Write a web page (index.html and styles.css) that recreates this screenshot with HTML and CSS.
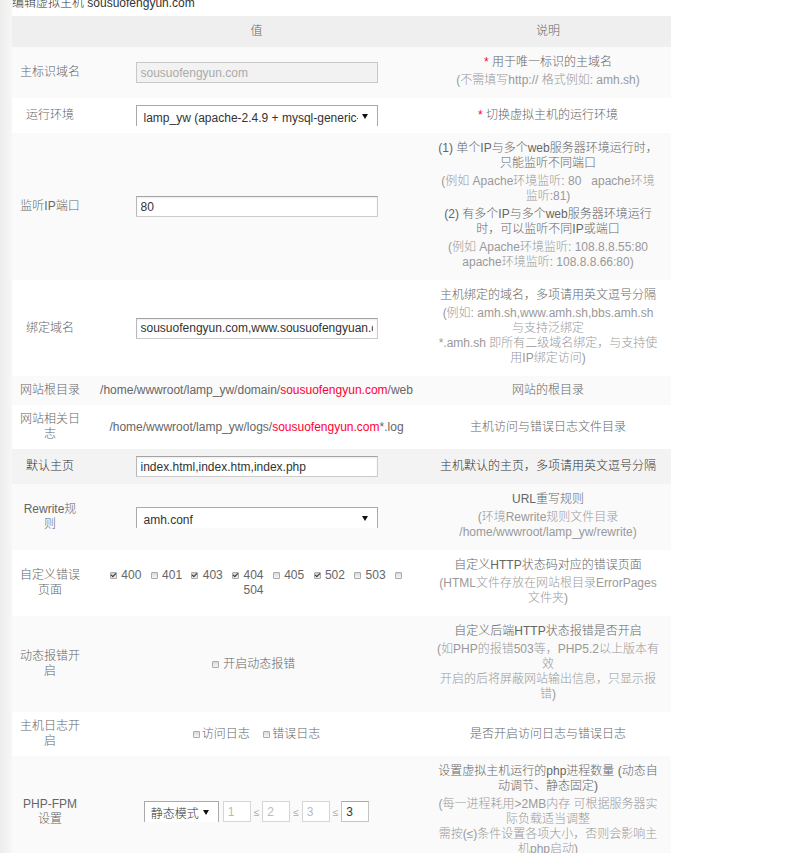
FILE: index.html
```html
<!DOCTYPE html>
<html lang="zh-CN">
<head>
  <meta charset="UTF-8" />
  <title>编辑虚拟主机</title>
  <link rel="stylesheet" href="styles.css">
</head>
<body>
  <div class="page">
    <h3 class="title">编辑虚拟主机 sousuofengyun.com</h3>

    <table class="host-form">
      <colgroup>
        <col class="col-label">
        <col class="col-value">
        <col class="col-note">
      </colgroup>
      <thead>
        <tr><th></th><th>值</th><th>说明</th></tr>
      </thead>
      <tbody>
        <tr class="alt">
          <td class="label">主标识域名</td>
          <td class="value"><input class="txt" type="text" value="sousuofengyun.com" disabled></td>
          <td class="note">
            <p><span class="req">*</span> 用于唯一标识的主域名</p>
            <p class="tip">(不需填写http:// 格式例如: amh.sh)</p>
          </td>
        </tr>
        <tr>
          <td class="label">运行环境</td>
          <td class="value">
            <div class="select">
              <span class="select-text">lamp_yw (apache-2.4.9 + mysql-generic-5.5.37 + php-5.4.29)</span>
              <i class="caret"></i>
            </div>
          </td>
          <td class="note"><span class="req">*</span> 切换虚拟主机的运行环境</td>
        </tr>
        <tr class="alt">
          <td class="label">监听IP端口</td>
          <td class="value"><input class="txt" type="text" value="80"></td>
          <td class="note">
            <p>(1) 单个IP与多个web服务器环境运行时，只能监听不同端口</p>
            <p class="tip">(例如 Apache环境监听: 80&nbsp;&nbsp; apache环境监听:81)</p>
            <p>(2) 有多个IP与多个web服务器环境运行时，可以监听不同IP或端口</p>
            <p class="tip">(例如 Apache环境监听: 108.8.8.55:80 apache环境监听: 108.8.8.66:80)</p>
          </td>
        </tr>
        <tr>
          <td class="label">绑定域名</td>
          <td class="value"><input class="txt" type="text" value="sousuofengyun.com,www.sousuofengyuan.com"></td>
          <td class="note">
            <p>主机绑定的域名，多项请用英文逗号分隔</p>
            <p class="tip">(例如: amh.sh,www.amh.sh,bbs.amh.sh 与支持泛绑定<br>*.amh.sh 即所有二级域名绑定，与支持使用IP绑定访问)</p>
          </td>
        </tr>
        <tr class="alt">
          <td class="label">网站根目录</td>
          <td class="value">/home/wwwroot/lamp_yw/domain/<span class="hl">sousuofengyun.com</span>/web</td>
          <td class="note">网站的根目录</td>
        </tr>
        <tr>
          <td class="label">网站相关日志</td>
          <td class="value">/home/wwwroot/lamp_yw/logs/<span class="hl">sousuofengyun.com</span>*.log</td>
          <td class="note">主机访问与错误日志文件目录</td>
        </tr>
        <tr class="hover">
          <td class="label">默认主页</td>
          <td class="value"><input class="txt" type="text" value="index.html,index.htm,index.php"></td>
          <td class="note">主机默认的主页，多项请用英文逗号分隔</td>
        </tr>
        <tr class="alt">
          <td class="label">Rewrite规则</td>
          <td class="value">
            <div class="select">
              <span class="select-text">amh.conf</span>
              <i class="caret"></i>
            </div>
          </td>
          <td class="note">
            <p>URL重写规则</p>
            <p class="tip">(环境Rewrite规则文件目录 /home/wwwroot/lamp_yw/rewrite)</p>
          </td>
        </tr>
        <tr>
          <td class="label">自定义错误页面</td>
          <td class="value">
            <div class="codes">
              <label class="chk"><span class="cb on"></span> 400</label>
              <label class="chk"><span class="cb"></span> 401</label>
              <label class="chk"><span class="cb on"></span> 403</label>
              <label class="chk"><span class="cb on"></span> 404</label>
              <label class="chk"><span class="cb"></span> 405</label>
              <label class="chk"><span class="cb on"></span> 502</label>
              <label class="chk"><span class="cb"></span> 503</label>
              <label class="chk"><span class="cb"></span> 504</label>
            </div>
          </td>
          <td class="note">
            <p>自定义HTTP状态码对应的错误页面</p>
            <p class="tip">(HTML文件存放在网站根目录ErrorPages文件夹)</p>
          </td>
        </tr>
        <tr class="alt">
          <td class="label">动态报错开启</td>
          <td class="value"><label class="chk"><span class="cb"></span> 开启动态报错</label></td>
          <td class="note">
            <p>自定义后端HTTP状态报错是否开启</p>
            <p class="tip">(如PHP的报错503等，PHP5.2以上版本有效<br>开启的后将屏蔽网站输出信息，只显示报错)</p>
          </td>
        </tr>
        <tr>
          <td class="label">主机日志开启</td>
          <td class="value log-opts">
            <label class="chk"><span class="cb"></span>访问日志</label>
            <label class="chk"><span class="cb"></span>错误日志</label>
          </td>
          <td class="note">是否开启访问日志与错误日志</td>
        </tr>
        <tr class="alt">
          <td class="label">PHP-FPM设置</td>
          <td class="value">
            <div class="fpm">
              <div class="select mode">
                <span class="select-text">静态模式</span>
                <i class="caret"></i>
              </div>
              <input class="num" type="text" value="1" disabled>
              <span class="le">≤</span>
              <input class="num" type="text" value="2" disabled>
              <span class="le">≤</span>
              <input class="num" type="text" value="3" disabled>
              <span class="le">≤</span>
              <input class="num" type="text" value="3">
            </div>
          </td>
          <td class="note">
            <p>设置虚拟主机运行的php进程数量 (动态自动调节、静态固定)</p>
            <p class="tip">(每一进程耗用&gt;2MB内存 可根据服务器实际负载适当调整<br>需按(≤)条件设置各项大小，否则会影响主机php启动)</p>
          </td>
        </tr>
      </tbody>
    </table>
  </div>
</body>
</html>
```

FILE: styles.css
```css
body {
  margin: 0;
  background: linear-gradient(to right, #ececec, #f7f7f7 12px, #fff 12px);
  font: 300 12px/15px "Liberation Sans", "Noto Sans CJK SC", sans-serif;
  color: #666;
}
.page { padding-left: 12px; }
.title {
  margin: -5px 0 5px;
  font-size: 12px;
  font-weight: 300;
  line-height: 16px;
  color: #333;
}

/* form table */
.host-form {
  width: 659px;
  border-collapse: collapse;
  table-layout: fixed;
}
.col-label { width: 76px; }
.col-value { width: 337px; }
.col-note { width: 246px; }
.host-form th {
  background: #efefef;
  padding: 8px;
  font-weight: 300;
  color: #666;
  text-align: center;
}
.host-form td {
  padding: 7px;
  text-align: center;
  vertical-align: middle;
}
.host-form td.value { padding: 7px 10px; }
.host-form td.note { padding: 7px 11px; }
.host-form tr.alt td { background: #fafafa; }
.host-form tr.hover td { background: #f3f3f3; }
.host-form tr.hover .label,
.host-form tr.hover .note { color: #333; }

.note p { margin: 0 0 3px; }
.note p:first-child { margin-top: 1px; }
.note .tip { color: #999; }
.req, .hl { color: #f03; }

/* controls */
.txt {
  display: block;
  box-sizing: border-box;
  width: 242px;
  height: 21px;
  margin: 0 auto;
  padding: 0 4px;
  border: 1px solid #ccc;
  border-top-color: #a3a3a3;
  border-left-color: #b8b8b8;
  box-shadow: inset 0 1px 2px rgba(0, 0, 0, .08);
  background: #fff;
  font: 12px "Liberation Sans", "Noto Sans CJK SC", sans-serif;
  color: #333;
}
.txt:disabled {
  background: #f2f2f2;
  border-color: #c8c8c8;
  box-shadow: none;
  color: #aaa;
}
.select {
  display: flex;
  box-sizing: border-box;
  width: 242px;
  height: 21px;
  margin: 0 auto;
  border: 1px solid #aaa;
  border-bottom: 0;
  background: #fff;
  overflow: hidden;
  color: #333;
  text-align: left;
}
.select-text {
  flex: 1;
  min-width: 0;
  overflow: hidden;
  white-space: nowrap;
  padding: 5px 0 0 7px;
  line-height: 15px;
}
.caret {
  flex: none;
  width: 0;
  height: 0;
  margin: 8px 9px 0 4px;
  border-left: 3px solid transparent;
  border-right: 3px solid transparent;
  border-top: 5px solid #111;
}
.select.mode { width: 75px; margin: 0 4px 0 0; }
.select.mode .select-text { padding-left: 6px; }

.fpm {
  display: flex;
  align-items: center;
  justify-content: center;
}
.num {
  box-sizing: border-box;
  width: 28px;
  height: 21px;
  margin: 0;
  padding: 0 4px;
  border: 1px solid #c4c4c4;
  border-top-color: #a8a8a8;
  background: #fff;
  font: 12px "Liberation Sans", sans-serif;
  color: #333;
}
.num:disabled { border-color: #d6d6d6; color: #bbb; background: #fff; }
.le { margin: 2px 3px 0; font-size: 10px; color: #aaa; }

/* checkboxes */
.codes { max-width: 300px; margin: 0 auto; }
.chk { margin-right: 6px; }
.cb {
  position: relative;
  display: inline-block;
  box-sizing: border-box;
  width: 7px;
  height: 7px;
  margin-right: 1px;
  border: 1px solid #aaa;
  border-radius: 1px;
  background: linear-gradient(#dadada, #f6f6f6);
  vertical-align: middle;
}
.cb.on { background: linear-gradient(#d0d0d0, #ececec); }
.cb.on::after {
  content: "";
  position: absolute;
  left: 1px;
  top: -1px;
  width: 2px;
  height: 4px;
  border: solid #333;
  border-width: 0 1px 1px 0;
  transform: rotate(45deg);
}
.log-opts .chk { margin: 0 5px; }
.log-opts .cb { margin-right: 2px; }
```
